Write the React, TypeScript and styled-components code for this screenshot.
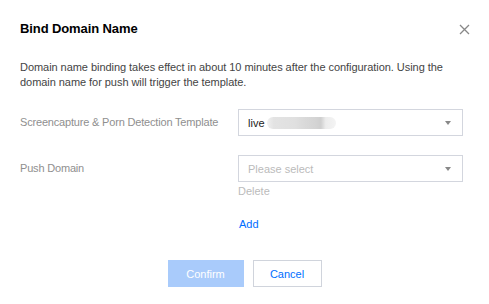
import React from "react";
import styled, { createGlobalStyle } from "styled-components";

const Global = createGlobalStyle`
  html, body { margin: 0; padding: 0; background: #fff; }
  body { font-family: "Liberation Sans", Arial, sans-serif; -webkit-font-smoothing: antialiased; }
`;

const Dialog = styled.div`
  width: 489px;
  height: 304px;
  box-sizing: border-box;
  padding: 19px 20px 0 20px;
  display: flex;
  flex-direction: column;
  background: #fff;
`;

const Header = styled.div`
  display: flex;
  align-items: center;
  justify-content: space-between;
  height: 20px;
`;

const Title = styled.h3`
  margin: 0;
  font-size: 13px;
  line-height: 20px;
  font-weight: 700;
  color: #000;
  letter-spacing: -0.1px;
`;

const CloseBtn = styled.button`
  border: 0;
  background: transparent;
  padding: 0;
  width: 12px;
  height: 12px;
  display: flex;
  align-items: center;
  justify-content: center;
  margin-right: -1px;
  margin-top: 1px;
  cursor: pointer;
`;

const Desc = styled.p`
  margin: 21px 0 0 0;
  font-size: 11px;
  line-height: 15px;
  color: #444;
  letter-spacing: -0.05px;
`;

const Form = styled.div`
  margin-top: 19px;
  display: flex;
  flex-direction: column;
  gap: 19px;
`;

const Row = styled.div`
  display: flex;
  align-items: flex-start;
`;

const Label = styled.div`
  width: 218px;
  flex: none;
  font-size: 11px;
  line-height: 27px;
  color: #8f8f8f;
  white-space: nowrap;
  letter-spacing: -0.18px;
`;

const Field = styled.div`
  display: flex;
  flex-direction: column;
`;

const Select = styled.div<{ $placeholder?: boolean }>`
  width: 225px;
  height: 27px;
  box-sizing: border-box;
  border: 1px solid #d3d6de;
  display: flex;
  align-items: center;
  padding: 0 10px 0 9px;
  font-size: 11px;
  color: ${(p) => (p.$placeholder ? "#bbb" : "#222")};
`;

const SelectText = styled.span`
  flex: 1;
  display: flex;
  align-items: center;
  gap: 2px;
`;

const Blur = styled.span`
  display: inline-block;
  width: 69px;
  height: 12px;
  border-radius: 6px;
  background: linear-gradient(
    90deg,
    #f0f0f0 0%,
    #e3e3e3 10%,
    #e0e0e0 40%,
    #d9d9d9 55%,
    #d4d4d4 70%,
    #cfcfcf 78%,
    #ececec 85%,
    #f4f4f4 100%
  );
  filter: blur(0.6px);
`;

const Arrow = styled.span`
  width: 0;
  height: 0;
  border-left: 3.5px solid transparent;
  border-right: 3.5px solid transparent;
  border-top: 4px solid #888;
  margin-right: 1px;
`;

const LinkText = styled.span<{ $tone: "muted" | "blue" }>`
  font-size: 11px;
  line-height: 14px;
  color: ${(p) => (p.$tone === "blue" ? "#006eff" : "#bbb")};
  cursor: pointer;
`;

const DeleteLink = styled(LinkText)`
  margin-top: 2px;
`;

const AddRow = styled.div`
  margin-top: 16px;
  padding-left: 219px;
`;

const Footer = styled.div`
  margin-top: 28px;
  display: flex;
  justify-content: center;
  gap: 9px;
`;

const Button = styled.button<{ $primary?: boolean }>`
  height: 27px;
  box-sizing: border-box;
  font-family: inherit;
  font-size: 11px;
  padding: 0;
  width: ${(p) => (p.$primary ? "76px" : "69px")};
  border: 1px solid ${(p) => (p.$primary ? "#a9cbfb" : "#d0d4dc")};
  background: ${(p) => (p.$primary ? "#a9cbfb" : "#fff")};
  color: ${(p) => (p.$primary ? "#fff" : "#006eff")};
  cursor: pointer;
`;

export default function App() {
  return (
    <>
      <Global />
      <Dialog>
        <Header>
          <Title>Bind Domain Name</Title>
          <CloseBtn aria-label="close">
            <svg width="11" height="11" viewBox="0 0 11 11">
              <path d="M1 1L10 10M10 1L1 10" stroke="#888" strokeWidth="1.3" />
            </svg>
          </CloseBtn>
        </Header>
        <Desc>
          Domain name binding takes effect in about 10 minutes after the configuration. Using the
          domain name for push will trigger the template.
        </Desc>
        <Form>
          <Row>
            <Label>Screencapture &amp; Porn Detection Template</Label>
            <Field>
              <Select>
                <SelectText>
                  live <Blur />
                </SelectText>
                <Arrow />
              </Select>
            </Field>
          </Row>
          <Row>
            <Label>Push Domain</Label>
            <Field>
              <Select $placeholder>
                <SelectText>Please select</SelectText>
                <Arrow />
              </Select>
              <DeleteLink $tone="muted">Delete</DeleteLink>
            </Field>
          </Row>
        </Form>
        <AddRow>
          <LinkText $tone="blue">Add</LinkText>
        </AddRow>
        <Footer>
          <Button $primary>Confirm</Button>
          <Button>Cancel</Button>
        </Footer>
      </Dialog>
    </>
  );
}
